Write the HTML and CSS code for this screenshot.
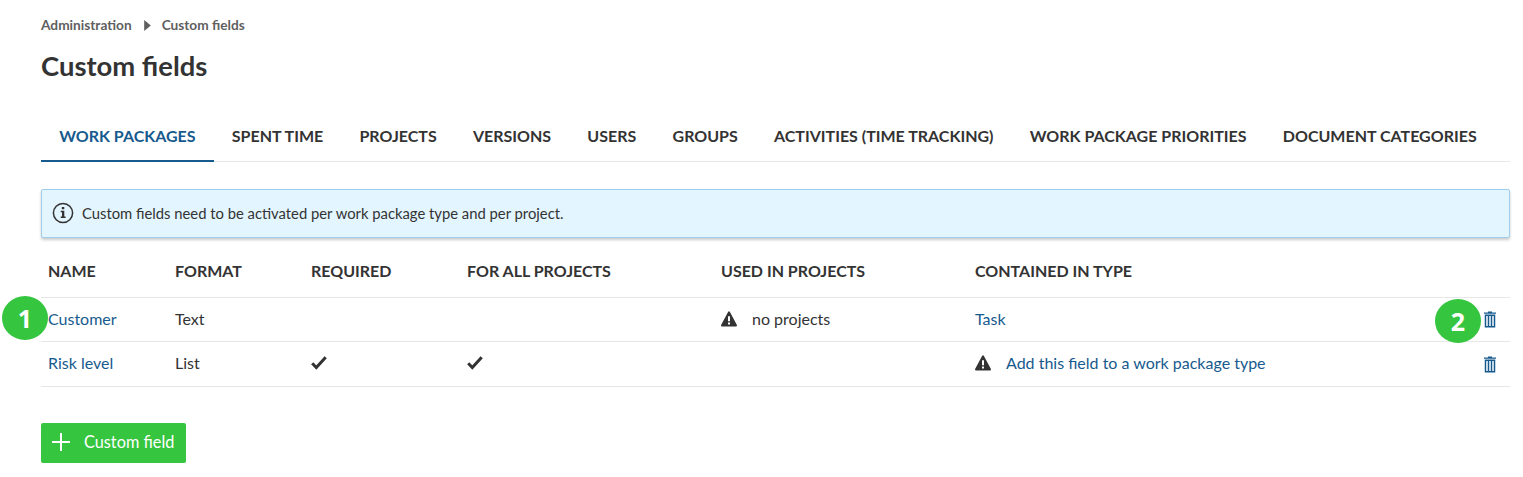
FILE: index.html
```html
<!DOCTYPE html>
<html lang="en">
<head>
<meta charset="utf-8">
<title>Custom fields</title>
<link rel="stylesheet" href="styles.css">
</head>
<body>
<svg class="symbols" aria-hidden="true">
  <symbol id="warning" viewBox="0 0 16 16"><path fill-rule="evenodd" d="M7.2.7Q8 0 8.800.7L15.900 14Q16.200 15.500 15 15.500H1Q-.2 15.500.1 14ZM7 5.200V10.200H9V5.200ZM7 11.500V13.500H9V11.500Z"/></symbol>
  <symbol id="check" viewBox="0 0 16 14"><path d="M1.200 7.300 5.300 11.600 14.700 1.300" fill="none" stroke="currentColor" stroke-width="3"/></symbol>
  <symbol id="trash" viewBox="0 0 12 17"><path d="M4 .4h4v1h4v1.400H0V1.400h4Z"/><path d="M1.500 4.200h9V15.700h-9ZM4.500 5v10.500M7.500 5v10.500" fill="none" stroke="currentColor" stroke-width="1.500"/></symbol>
</svg>
<main class="page">
  <nav class="breadcrumb"><span>Administration</span><svg class="arrow" viewBox="0 0 6 10"><path d="M0 0 6 5 0 10Z"/></svg><span>Custom fields</span></nav>
  <h1 class="title">Custom fields</h1>
  <nav class="tabs">
    <a class="tab active">WORK PACKAGES</a>
    <a class="tab">SPENT TIME</a>
    <a class="tab">PROJECTS</a>
    <a class="tab">VERSIONS</a>
    <a class="tab">USERS</a>
    <a class="tab">GROUPS</a>
    <a class="tab">ACTIVITIES (TIME TRACKING)</a>
    <a class="tab">WORK PACKAGE PRIORITIES</a>
    <a class="tab">DOCUMENT CATEGORIES</a>
  </nav>
  <div class="notice">
    <svg class="info" viewBox="0 0 22 22"><circle cx="11" cy="11" r="9.600" fill="none" stroke="currentColor" stroke-width="1.500"/><path d="M9.800 5h2.500v2.200H9.800ZM8.700 8.700h3.600v5.800h1.300V16H8.700v-1.500H10v-4.300H8.700Z"/></svg>
    <span>Custom fields need to be activated per work package type and per project.</span>
  </div>
  <section class="table">
    <div class="row head"><span>NAME</span><span>FORMAT</span><span>REQUIRED</span><span>FOR ALL PROJECTS</span><span>USED IN PROJECTS</span><span>CONTAINED IN TYPE</span><span></span></div>
    <div class="row">
      <span><a class="link">Customer</a></span><span>Text</span><span></span><span></span>
      <span class="flagged"><svg class="warning"><use href="#warning"/></svg>no projects</span>
      <span><a class="link">Task</a></span>
      <span class="remove link"><svg class="trash"><use href="#trash"/></svg></span>
      <b class="badge first">1</b><b class="badge second">2</b>
    </div>
    <div class="row last">
      <span><a class="link">Risk level</a></span><span>List</span>
      <span><svg class="check"><use href="#check"/></svg></span><span><svg class="check"><use href="#check"/></svg></span><span></span>
      <span class="flagged"><svg class="warning"><use href="#warning"/></svg><a class="link">Add this field to a work package type</a></span>
      <span class="remove link"><svg class="trash"><use href="#trash"/></svg></span>
    </div>
  </section>
  <button class="create"><svg class="plus" viewBox="0 0 18 18"><path d="M9 0v18M0 9h18" stroke="currentColor" stroke-width="2"/></svg>Custom field</button>
</main>
</body>
</html>
```
FILE: styles.css
```css
* { box-sizing: border-box; }
body { margin: 0; background: #fff; color: #333; font: 16px/24px Lato, sans-serif; }
svg { display: block; flex: none; fill: currentColor; }
.symbols { position: absolute; width: 0; height: 0; }
.page { padding: 15px 13px 0 41px; }
.breadcrumb { display: flex; align-items: center; height: 20px; color: #5f5f5f; font-size: 13.700px; font-weight: 700; }
.arrow { width: 7px; height: 11px; margin: 1px 11px 0 12px; }
.title { margin: 11px 0 0; height: 40px; font-size: 27.400px; line-height: 40px; font-weight: 700; }
.tabs { display: flex; height: 50px; margin-top: 26px; border-bottom: 1px solid #e7e7e7; }
.tab { height: 50px; padding: 0 18.140px; line-height: 48px; font-weight: 700; white-space: nowrap; }
.active { color: #175a8e; border-bottom: 2px solid #175a8e; }
.notice { display: flex; align-items: center; gap: 7px; height: 49px; margin-top: 27px; padding: 0 11px; border: 1px solid #9fcdeb; border-radius: 2px; background: #e3f5ff; box-shadow: 0 2px 3px rgba(0,0,0,.2); font-size: 14.800px; }
.notice span { padding-bottom: 2px; }
.info { width: 22px; height: 22px; margin: -2px 1px 0 -1px; }
.table { margin-top: 7px; }
.row { position: relative; display: grid; grid-template-columns: 127px 136px 156px 254px 254px 1fr 34px; align-items: center; height: 44px; padding: 0 0 2px 7px; border-bottom: 1px solid #e7e7e7; }
.head { height: 53px; padding-bottom: 1px; font-weight: 700; }
.last { height: 45px; padding-bottom: 2px; }
.link { color: #175a8e; }
.flagged { display: flex; align-items: center; gap: 15px; white-space: nowrap; }
.warning { width: 16px; height: 16px; }
.check { width: 16px; height: 14px; }
.trash { width: 12px; height: 17px; }
.remove { justify-self: end; padding: 2px 14px 0 0; }
.badge { position: absolute; width: 46px; height: 44px; border-radius: 50%; background: #35c53f; color: #fff; font: 700 25px/44px "Open Sans", sans-serif; text-align: center; }
.first { left: -39px; top: -2px; }
.second { right: 29px; top: 1px; }
.create { display: flex; align-items: center; gap: 14px; width: 145px; height: 40px; margin-top: 36px; padding: 0 0 2px 11px; border: 0; border-radius: 2px; background: #35c53f; color: #fff; font: 16.300px/24px Lato, sans-serif; white-space: nowrap; }
.plus { width: 18px; height: 18px; }
```
